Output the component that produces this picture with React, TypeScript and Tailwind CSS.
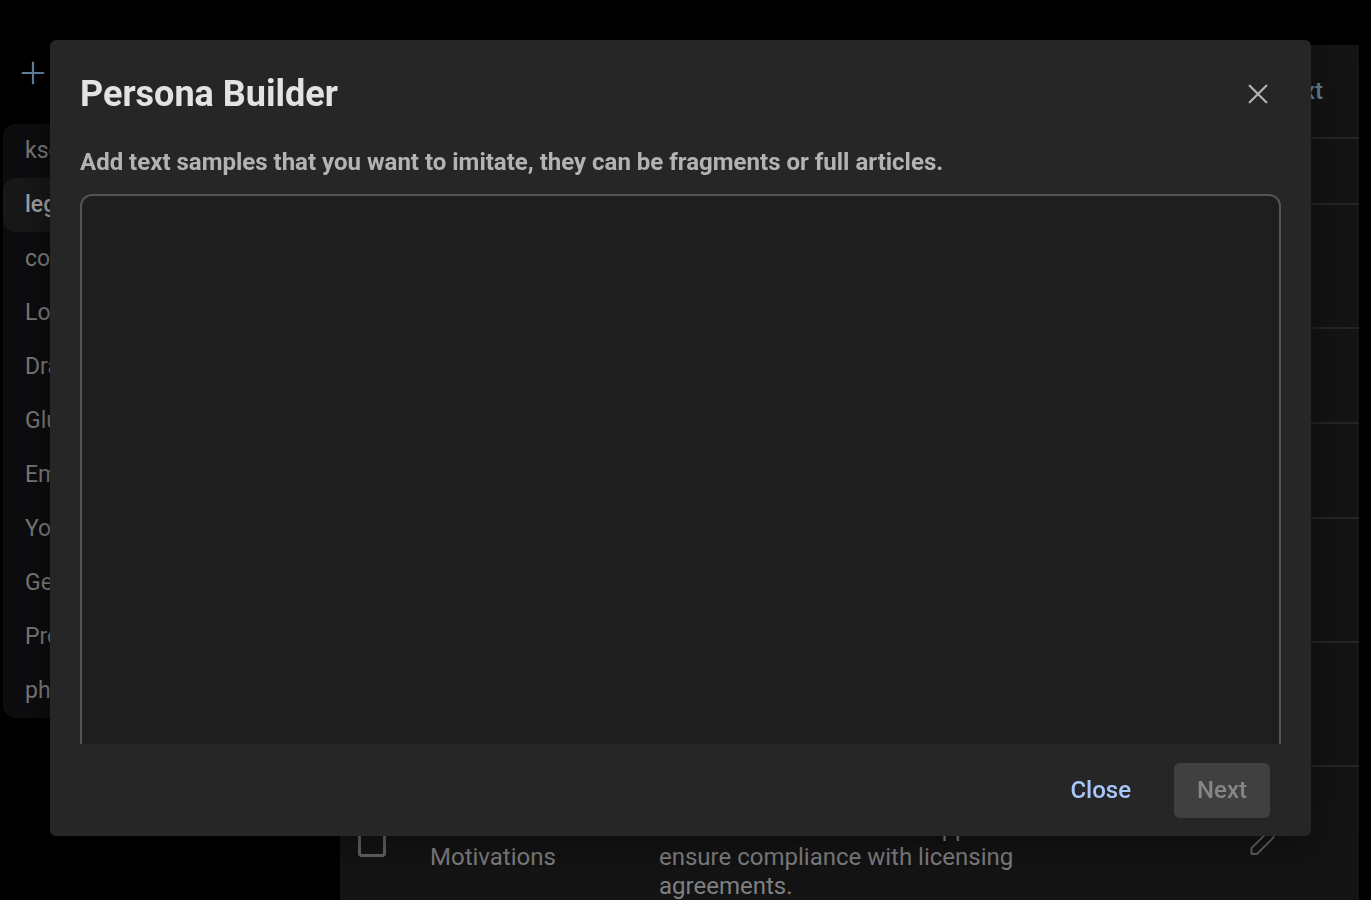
import React from "react";

const personas = [
  "kso",
  "legal",
  "cold",
  "Long",
  "Draft",
  "Glue",
  "Email",
  "Your",
  "Gene",
  "Prod",
  "phone",
];

const emptyRows = [
  { id: "a", height: "h-[124px]" },
  { id: "b", height: "h-[95px]" },
  { id: "c", height: "h-[95px]" },
  { id: "d", height: "h-[124px]" },
  { id: "e", height: "h-[124px]" },
];

function PlusIcon() {
  return (
    <svg viewBox="0 0 24 24" className="size-6" fill="none" stroke="currentColor" strokeWidth="2.200" aria-hidden="true">
      <path d="M12 .8v22.400M.8 12h22.400" />
    </svg>
  );
}

function CrossIcon() {
  return (
    <svg viewBox="0 0 20 20" className="size-5" fill="none" stroke="currentColor" strokeWidth="2.200" strokeLinecap="round" aria-hidden="true">
      <path d="M1.700 1.700l16.600 16.600M18.300 1.700l-16.600 16.600" />
    </svg>
  );
}

function PencilIcon() {
  return (
    <svg viewBox="0 0 26 26" className="size-[26px]" fill="none" stroke="currentColor" strokeWidth="1.8" strokeLinejoin="round" aria-hidden="true">
      <path d="M1.500 23.800v-5.600L17.600 2.100a2.400 2.400 0 0 1 3.400 0l2.200 2.200a2.400 2.400 0 0 1 0 3.400L7.100 23.800z" />
    </svg>
  );
}

function Sidebar() {
  return (
    <nav className="flex w-[340px] shrink-0 flex-col pt-[57px] pl-[3px]">
      <button type="button" aria-label="Add persona" className="ml-[14px] flex size-8 items-center justify-center self-start text-[#64859f]">
        <PlusIcon />
      </button>
      <ul className="mt-[35px] mr-4 rounded-xl bg-[#0d0d0f] text-[23px] text-[#7b7b7b]">
        {personas.map((name) => (
          <li key={name}>
            <a
              href="#"
              className={
                name === "legal"
                  ? "flex h-[54px] items-center rounded-xl bg-[#181818] px-[22px] font-medium text-[#a3a3a3]"
                  : "flex h-[54px] items-center px-[22px]"
              }
            >
              {name}
            </a>
          </li>
        ))}
      </ul>
    </nav>
  );
}

function DetailsPanel() {
  return (
    <main className="mt-[45px] mr-3 min-w-0 flex-1 bg-[#141414] text-2xl leading-[29px] text-[#808080]">
      <div className="flex h-[92px] items-center justify-end pr-9">
        <button type="button" className="font-medium text-[#64859f]">
          Next
        </button>
      </div>
      <table className="w-full table-fixed border-collapse">
        <colgroup>
          <col className="w-[90px]" />
          <col className="w-[229px]" />
          <col />
          <col className="w-28" />
        </colgroup>
        <tbody>
          <tr className="h-[66px] border-y-2 border-[#252525]">
            <td colSpan={4} />
          </tr>
          {emptyRows.map((row) => (
            <tr key={row.id} className={`${row.height} border-b-2 border-[#252525]`}>
              <td colSpan={4} />
            </tr>
          ))}
          <tr className="h-[153px]">
            <td className="pl-[18px]">
              <input
                type="checkbox"
                aria-label="Select motivations"
                className="block size-7 appearance-none rounded-sm border-[3px] border-[#646464]"
              />
            </td>
            <td>
              Goals and
              <br />
              Motivations
            </td>
            <td>
              To find and use
              <br />
              music that is suitable for apps and
              <br />
              ensure compliance with licensing
              <br />
              agreements.
            </td>
            <td className="pl-[3px]">
              <button type="button" aria-label="Edit motivations" className="flex text-[#686868]">
                <PencilIcon />
              </button>
            </td>
          </tr>
        </tbody>
      </table>
    </main>
  );
}

function PersonaDialog() {
  return (
    <div className="fixed inset-0 flex pt-10 pr-[60px] pb-16 pl-[50px]">
      <section
        role="dialog"
        aria-modal="true"
        aria-labelledby="dialog-title"
        className="flex min-w-0 flex-1 flex-col rounded-md bg-[#262626] shadow-[0_8px_40px_rgba(0,0,0,0.4)]"
      >
        <header className="flex h-[107px] shrink-0 items-center justify-between pr-[43px] pl-[30px]">
          <h1 id="dialog-title" className="text-4xl font-bold text-[#e3e3e3]">
            Persona Builder
          </h1>
          <button type="button" aria-label="Close dialog" className="text-[#b4b4b4]">
            <CrossIcon />
          </button>
        </header>
        <div className="flex min-h-0 flex-1 flex-col overflow-hidden px-[30px]">
          <label htmlFor="samples" className="shrink-0 pb-4 text-2xl leading-[31px] font-bold text-[#b3b3b3]">
            Add text samples that you want to imitate, they can be fragments or full articles.
          </label>
          <textarea
            id="samples"
            className="min-h-[640px] w-full shrink-0 resize-none rounded-xl border-2 border-[#545454] bg-[#1e1e1e] p-4 text-2xl text-[#e3e3e3] outline-none"
          />
        </div>
        <footer className="flex h-[92px] shrink-0 items-center justify-end gap-5 pr-[41px] text-2xl font-medium">
          <button type="button" className="h-[55px] px-[23px] text-[#a8c7fa]">
            Close
          </button>
          <button type="button" disabled className="h-[55px] rounded-md bg-[#404040] px-[23px] text-[#868686]">
            Next
          </button>
        </footer>
      </section>
    </div>
  );
}

export default function App() {
  return (
    <div className="flex h-screen overflow-hidden bg-black font-[Roboto,sans-serif]">
      <Sidebar />
      <DetailsPanel />
      <PersonaDialog />
    </div>
  );
}
